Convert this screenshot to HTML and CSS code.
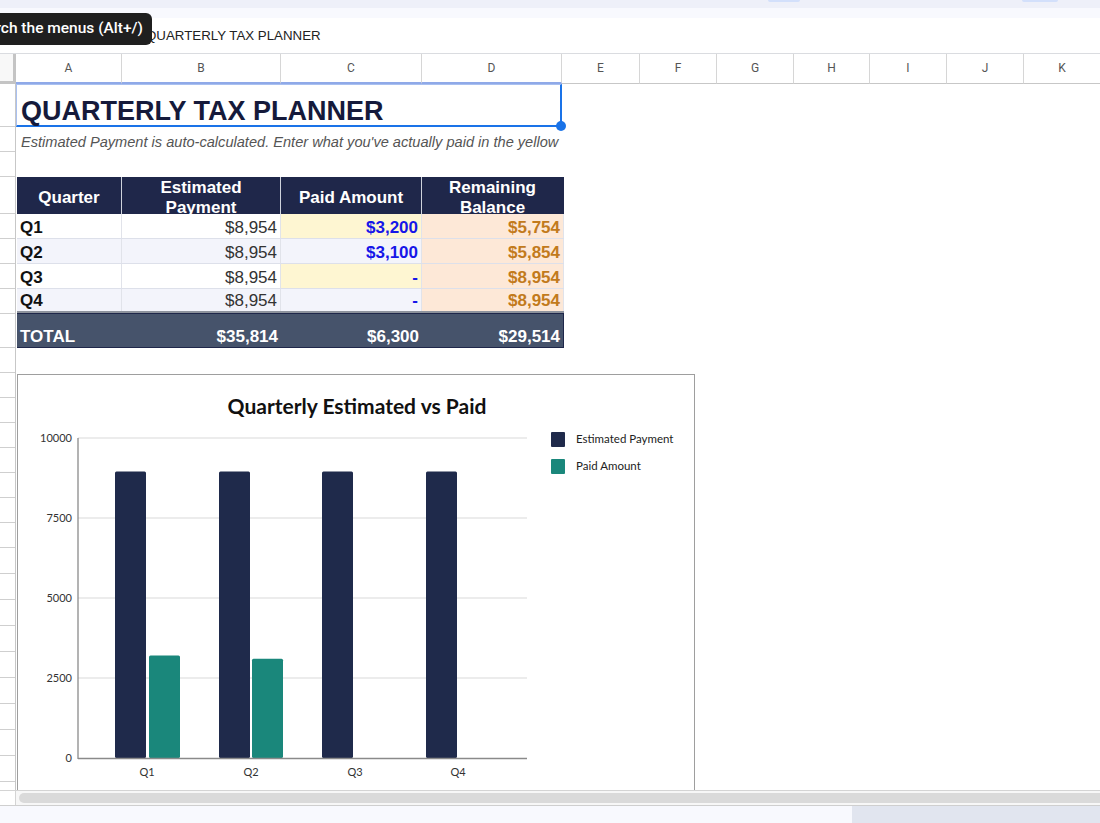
FILE: index.html
```html
<!DOCTYPE html>
<html lang="en">
<head>
    <meta charset="UTF-8">
    <meta name="viewport" content="width=device-width, initial-scale=1.0">
    <title>Quarterly Tax Planner</title>
    <link rel="stylesheet" href="styles.css">
</head>
<body>

    <div class="chrome-top">
        <span class="pill pill-1"></span>
        <span class="pill pill-2"></span>
    </div>
    <div class="chrome-sub"></div>

    <div class="formula-bar">
        <span class="fx-text">QUARTERLY TAX PLANNER</span>
        <div class="tooltip">Search the menus (Alt+/)</div>
    </div>

    <div class="col-headers">
        <div class="corner"></div>
        <div class="col-head sel w-a">A</div>
        <div class="col-head sel w-b">B</div>
        <div class="col-head sel w-c">C</div>
        <div class="col-head sel w-d">D</div>
        <div class="col-head w-e">E</div>
        <div class="col-head w-f">F</div>
        <div class="col-head w-g">G</div>
        <div class="col-head w-h">H</div>
        <div class="col-head w-i">I</div>
        <div class="col-head w-j">J</div>
        <div class="col-head w-k">K</div>
    </div>

    <div class="sheet">
        <div class="row-heads">
            <div class="rh h43"></div>
            <div class="rh h25"></div>
            <div class="rh h25"></div>
            <div class="rh h37"></div>
            <div class="rh h25"></div>
            <div class="rh h25"></div>
            <div class="rh h25"></div>
            <div class="rh h25"></div>
            <div class="rh h34"></div>
            <div class="rh h25"></div>
            <div class="rh h25"></div>
            <div class="rh h25"></div>
            <div class="rh h25"></div>
            <div class="rh h25"></div>
            <div class="rh h25"></div>
            <div class="rh h25"></div>
            <div class="rh h25"></div>
            <div class="rh h26"></div>
            <div class="rh h26"></div>
            <div class="rh h26"></div>
            <div class="rh h26"></div>
            <div class="rh h26"></div>
            <div class="rh h26"></div>
            <div class="rh h26"></div>
            <div class="rh h26"></div>
            <div class="rh h26"></div>
            <div class="rh h26"></div>
        </div>

        <div class="cells">
            <div class="title-cell">
                <h1>QUARTERLY TAX PLANNER</h1>
                <span class="handle"></span>
            </div>
            <div class="note-cell">Estimated Payment is auto-calculated. Enter what you've actually paid in the yellow column.</div>
            <div class="blank-row"></div>

            <div class="tax-table">
                <div class="tr head">
                    <div class="td">Quarter</div>
                    <div class="td">Estimated Payment</div>
                    <div class="td">Paid Amount</div>
                    <div class="td">Remaining Balance</div>
                </div>
                <div class="tr body">
                    <div class="td q">Q1</div>
                    <div class="td est">$8,954</div>
                    <div class="td paid yellow">$3,200</div>
                    <div class="td rem">$5,754</div>
                </div>
                <div class="tr body alt">
                    <div class="td q">Q2</div>
                    <div class="td est">$8,954</div>
                    <div class="td paid">$3,100</div>
                    <div class="td rem">$5,854</div>
                </div>
                <div class="tr body">
                    <div class="td q">Q3</div>
                    <div class="td est">$8,954</div>
                    <div class="td paid yellow">-</div>
                    <div class="td rem">$8,954</div>
                </div>
                <div class="tr body alt last">
                    <div class="td q">Q4</div>
                    <div class="td est">$8,954</div>
                    <div class="td paid">-</div>
                    <div class="td rem">$8,954</div>
                </div>
                <div class="tr total">
                    <div class="td q">TOTAL</div>
                    <div class="td est">$35,814</div>
                    <div class="td paid">$6,300</div>
                    <div class="td rem">$29,514</div>
                </div>
            </div>

            <div class="blank-row tall"></div>

            <div class="chart">
                <svg width="676" height="440" viewBox="0 0 676 440">
                    <text class="chart-title" x="339" y="39">Quarterly Estimated vs Paid</text>

                    <line class="grid" x1="60" y1="63" x2="509" y2="63"/>
                    <line class="grid" x1="60" y1="143" x2="509" y2="143"/>
                    <line class="grid" x1="60" y1="223" x2="509" y2="223"/>
                    <line class="grid" x1="60" y1="303" x2="509" y2="303"/>

                    <text class="y-label" x="54" y="67">10000</text>
                    <text class="y-label" x="54" y="147">7500</text>
                    <text class="y-label" x="54" y="227">5000</text>
                    <text class="y-label" x="54" y="307">2500</text>
                    <text class="y-label" x="54" y="387">0</text>

                    <rect class="bar-est" x="97" y="96.5" width="31" height="286.5" rx="1.5"/>
                    <rect class="bar-paid" x="131" y="280.6" width="31" height="102.4" rx="1.5"/>
                    <rect class="bar-est" x="201" y="96.5" width="31" height="286.5" rx="1.5"/>
                    <rect class="bar-paid" x="234" y="283.8" width="31" height="99.2" rx="1.5"/>
                    <rect class="bar-est" x="304" y="96.5" width="31" height="286.5" rx="1.5"/>
                    <rect class="bar-est" x="408" y="96.5" width="31" height="286.5" rx="1.5"/>

                    <line class="axis" x1="60" y1="63" x2="60" y2="384"/>
                    <line class="axis" x1="60" y1="383.5" x2="509" y2="383.5"/>

                    <text class="x-label" x="129" y="401">Q1</text>
                    <text class="x-label" x="233" y="401">Q2</text>
                    <text class="x-label" x="337" y="401">Q3</text>
                    <text class="x-label" x="440" y="401">Q4</text>

                    <rect class="bar-est" x="533" y="57" width="14" height="15" rx="1"/>
                    <text class="legend" x="558" y="68">Estimated Payment</text>
                    <rect class="bar-paid" x="533" y="84" width="14" height="15" rx="1"/>
                    <text class="legend" x="558" y="95">Paid Amount</text>
                </svg>
            </div>
        </div>
    </div>

    <div class="hscroll">
        <div class="hscroll-gap"></div>
        <div class="hscroll-thumb"></div>
    </div>
    <div class="bottom-bar">
        <div class="bottom-right"></div>
    </div>

</body>
</html>
```

FILE: styles.css
```css
body {
    margin: 0;
    height: 823px;
    overflow: hidden;
    font-family: "Liberation Sans", Arial, sans-serif;
    background-color: #fff;
    color: #222;
}

/* browser / app chrome */

.chrome-top {
    height: 8px;
    display: flex;
    background-color: #eef0f9;
}

.pill {
    height: 2px;
    background-color: #d3e0fb;
    border-radius: 0 0 3px 3px;
}

.pill-1 {
    margin-left: 768px;
    width: 32px;
}

.pill-2 {
    margin-left: 222px;
    width: 36px;
}

.chrome-sub {
    height: 10px;
    background-color: #f8f9fe;
}

.formula-bar {
    position: relative;
    height: 35px;
    display: flex;
    align-items: center;
    border-bottom: 1px solid #dadce0;
}

.fx-text {
    margin-left: 146px;
    font-size: 13.3px;
    color: #222;
}

.tooltip {
    position: absolute;
    right: 948px;
    top: -5px;
    height: 32px;
    padding: 0 9px 0 10px;
    line-height: 31px;
    white-space: nowrap;
    font-family: Roboto, "Liberation Sans", sans-serif;
    font-weight: 500;
    font-size: 15.5px;
    color: #fff;
    background-color: #1f1f1f;
    border-radius: 6px;
}

/* column headers */

.col-headers {
    display: flex;
    height: 30px;
}

.corner {
    width: 16px;
    box-sizing: border-box;
    border-right: 3px solid #c4c4c4;
    border-bottom: 3px solid #c4c4c4;
    background-color: #f8f8f8;
}

.col-head {
    box-sizing: border-box;
    height: 30px;
    border-right: 1px solid #d6d6d6;
    border-bottom: 1px solid #c7c7c7;
    text-align: center;
    line-height: 28px;
    font-family: Roboto, "Liberation Sans", sans-serif;
    font-size: 12px;
    color: #555;
}

.col-head.sel {
    border-bottom: 2px solid #8fa9e8;
}

.w-a { width: 106px; }
.w-b { width: 159px; }
.w-c { width: 141px; }
.w-d { width: 140px; }
.w-e { width: 78px; }
.w-f { width: 77px; }
.w-g { width: 77px; }
.w-h { width: 76px; }
.w-i { width: 77px; }
.w-j { width: 77px; }
.w-k { width: 76px; border-right: none; }

/* sheet body */

.sheet {
    display: flex;
    height: 706px;
    overflow: hidden;
}

.row-heads {
    width: 16px;
    flex-shrink: 0;
    box-sizing: border-box;
    border-right: 1px solid #c7c7c7;
}

.rh {
    box-sizing: border-box;
    border-bottom: 1px solid #cfcfcf;
}

.h25 { height: 25px; }
.h26 { height: 26px; }
.h34 { height: 34px; }
.h37 { height: 37px; }
.h43 { height: 43px; }

.cells {
    flex: 1;
    display: flex;
    flex-direction: column;
}

.cells > div {
    flex-shrink: 0;
}

.title-cell {
    position: relative;
    width: 546px;
    height: 43px;
    box-sizing: border-box;
    display: flex;
    align-items: flex-end;
    padding: 0 0 1px 4px;
    border-top: 1px solid #a9c0f0;
    border-left: 1px solid #a9c0f0;
    border-right: 2px solid #1a73e8;
    border-bottom: 2px solid #1a73e8;
}

.title-cell h1 {
    margin: 0;
    font-size: 27px;
    line-height: 26px;
    color: #151a3b;
}

.handle {
    position: absolute;
    right: -6px;
    bottom: -6px;
    width: 10px;
    height: 10px;
    border-radius: 50%;
    background-color: #1a73e8;
}

.note-cell {
    width: 546px;
    height: 25px;
    box-sizing: border-box;
    padding-left: 5px;
    display: flex;
    align-items: flex-end;
    line-height: 20px;
    white-space: nowrap;
    overflow: hidden;
    font-style: italic;
    font-size: 14.6px;
    color: #555;
}

.blank-row {
    height: 25px;
}

.blank-row.tall {
    height: 26px;
}

/* tax table */

.tax-table {
    width: 547px;
    margin-left: 1px;
    font-size: 17px;
}

.tr {
    display: grid;
    grid-template-columns: 105px 159px 141px 142px;
    box-sizing: border-box;
}

.td {
    box-sizing: border-box;
    display: flex;
    align-items: flex-end;
    justify-content: flex-end;
    padding: 0 3px;
    line-height: 20px;
    white-space: nowrap;
    overflow: hidden;
    border-right: 1px solid #e1e3ea;
}

.tr.head {
    height: 37px;
    background-color: #1f274a;
    color: #fff;
    font-weight: bold;
}

.tr.head .td {
    justify-content: center;
    align-items: center;
    text-align: center;
    white-space: normal;
    padding: 4px 4px 0;
    border-right: 1px solid #cfd3dc;
}

.tr.head .td:last-child,
.tr.total .td:last-child {
    border-right: 1px solid #1f274a;
}

.tr.body {
    height: 25px;
    border-bottom: 1px solid #dde0ea;
    background-color: #fff;
}

.tr.body.alt {
    background-color: #f3f4fb;
}

.tr.body.last {
    height: 24px;
    border-bottom: 2px solid #8d929c;
}

.td.q {
    justify-content: flex-start;
    font-weight: bold;
    color: #111;
}

.td.est {
    color: #333;
}

.td.paid {
    font-weight: bold;
    color: #1616e8;
}

.td.yellow {
    background-color: #fef6d2;
}

.td.rem {
    font-weight: bold;
    color: #c27a1c;
    background-color: #fde8d7;
}

.tr.total {
    height: 35px;
    background-color: #46536b;
    border-top: 1px solid #1f274a;
    border-bottom: 1px solid #1f274a;
    color: #fff;
    font-weight: bold;
}

.tr.total .td {
    color: #fff;
    background-color: transparent;
    border-right: none;
}

/* chart */

.chart {
    width: 678px;
    height: 442px;
    margin-left: 1px;
    box-sizing: border-box;
    border: 1px solid #9e9e9e;
    background-color: #fff;
}

.chart svg {
    display: block;
    font-family: Lato, "Open Sans", sans-serif;
}

.chart-title {
    font-size: 21px;
    font-weight: bold;
    fill: #111;
    text-anchor: middle;
}

.grid {
    stroke: #d9d9d9;
    stroke-width: 1;
}

.axis {
    stroke: #8a8a8a;
    stroke-width: 1.3;
}

.y-label {
    font-size: 11px;
    fill: #333;
    text-anchor: end;
}

.x-label {
    font-size: 11px;
    fill: #333;
    text-anchor: middle;
}

.legend {
    font-size: 11.5px;
    fill: #222;
}

.bar-est {
    fill: #1f2a4b;
}

.bar-paid {
    fill: #1a877b;
}

/* bottom scroll + status */

.hscroll {
    height: 16px;
    display: flex;
    box-sizing: border-box;
    border-top: 1px solid #d4d4d4;
    border-bottom: 1px solid #cfcfcf;
    background-color: #f7f7f7;
}

.hscroll-gap {
    width: 16px;
    box-sizing: border-box;
    border-right: 1px solid #d4d4d4;
    background-color: #fff;
}

.hscroll-thumb {
    flex: 1;
    margin: 2px 0 2px 3px;
    border-radius: 5px 0 0 5px;
    background-color: #dadada;
}

.bottom-bar {
    height: 17px;
    display: flex;
    justify-content: flex-end;
    background-color: #f8f9fe;
}

.bottom-right {
    width: 248px;
    background-color: #e1e5ef;
}
```
